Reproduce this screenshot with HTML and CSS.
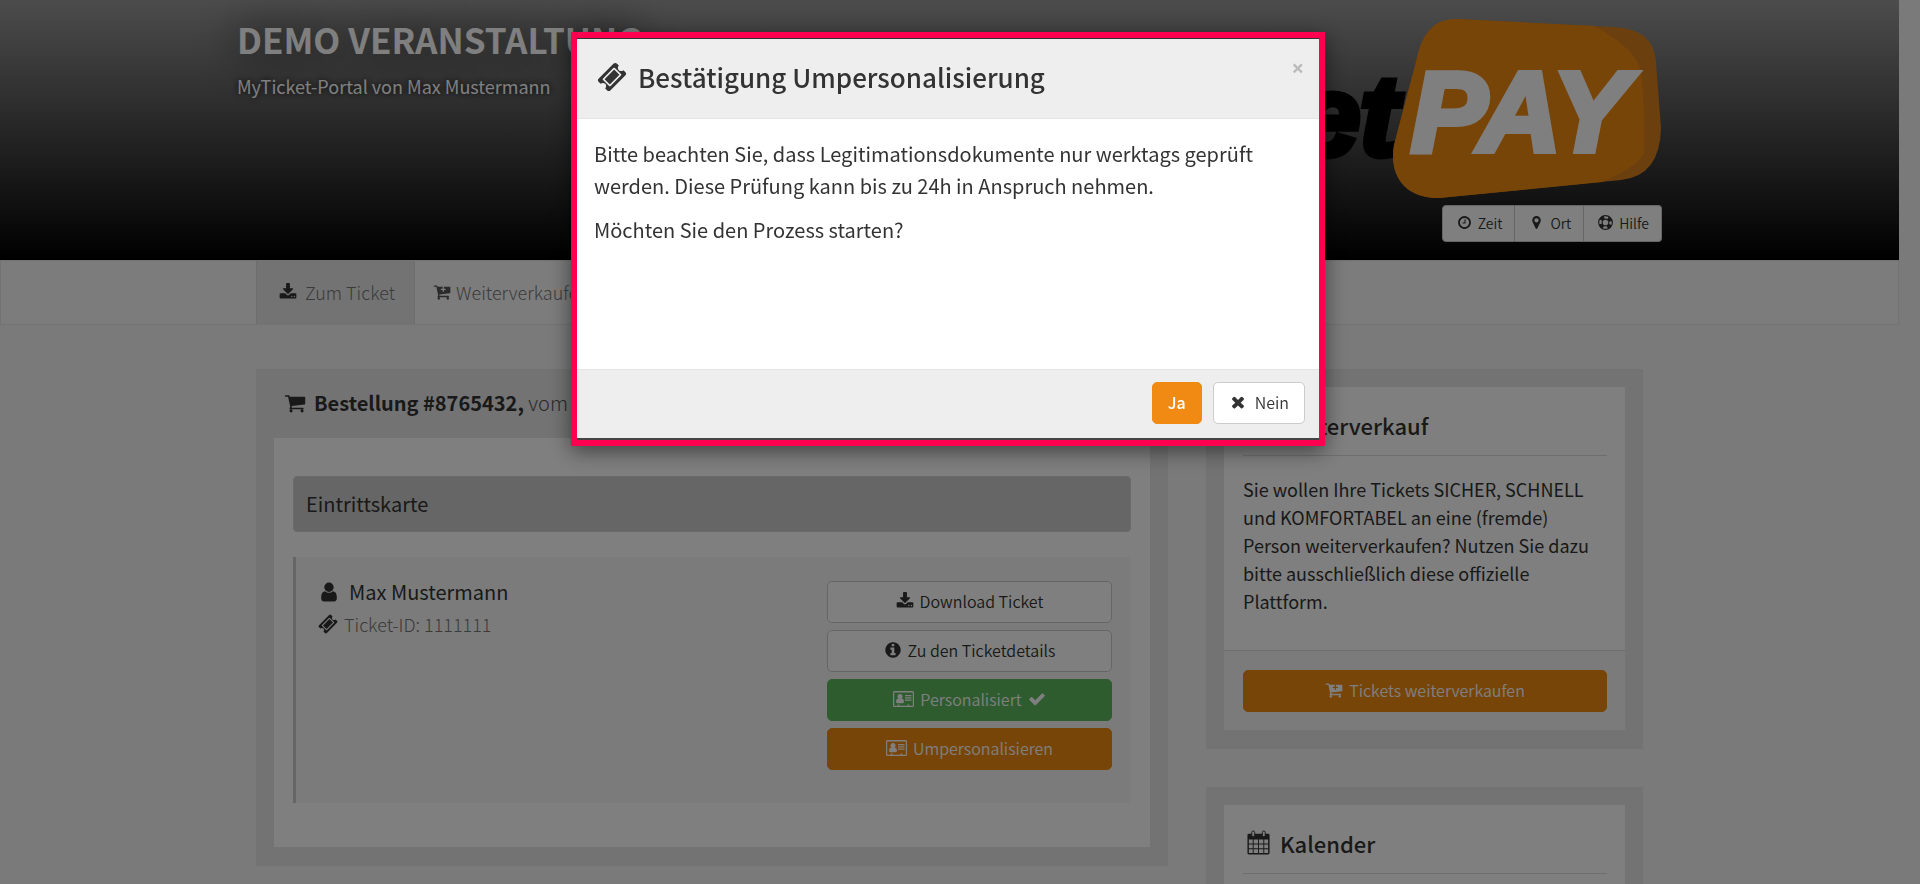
FILE: index.html
```html
<!DOCTYPE html>
<html lang="de">
<head>
  <meta charset="utf-8">
  <meta name="viewport" content="width=device-width, initial-scale=1">
  <title>MyTicket-Portal</title>
  <link rel="stylesheet" href="styles.css">
</head>
<body>

  <!-- Icons -->
  <svg class="sprite" aria-hidden="true">
    <symbol id="i-ticket" viewBox="0 0 1792 1792"><path d="M1024 452l316 316-572 572-316-316zm-211 979l618-618q19-19 19-45t-19-45l-362-362q-18-18-45-18t-45 18l-618 618q-19 19-19 45t19 45l362 362q18 18 45 18t45-18zm889-637l-907 908q-37 37-90.5 37t-90.5-37l-126-126q56-56 56-136t-56-136-136-56-136 56l-125-126q-37-37-37-90.5t37-90.5l907-906q37-37 90.5-37t90.5 37l125 125q-56 56-56 136t56 136 136 56 136-56l126 125q37 37 37 90.5t-37 90.5z"/></symbol>
    <symbol id="i-cart" viewBox="0 0 1792 1792"><path d="M704 1536q0 52-38 90t-90 38-90-38-38-90 38-90 90-38 90 38 38 90zm896 0q0 52-38 90t-90 38-90-38-38-90 38-90 90-38 90 38 38 90zm128-1088v512q0 24-16.5 42.5t-40.5 21.5l-1044 122q13 60 13 70 0 16-24 64h920q26 0 45 19t19 45-19 45-45 19h-1024q-26 0-45-19t-19-45q0-11 8-31.5t16-36 21.5-40 15.5-29.5l-177-823h-204q-26 0-45-19t-19-45 19-45 45-19h256q16 0 28.5 6.5t19.5 15.5 13 24.5 8 26 5.5 29.5 4.5 26h1201q26 0 45 19t19 45z"/></symbol>
    <symbol id="i-cart-plus" viewBox="0 0 1792 1792"><path d="M1280 640q0-26-19-45t-45-19h-128v-128q0-26-19-45t-45-19-45 19-19 45v128h-128q-26 0-45 19t-19 45 19 45 45 19h128v128q0 26 19 45t45 19 45-19 19-45v-128h128q26 0 45-19t19-45zM704 1536q0 52-38 90t-90 38-90-38-38-90 38-90 90-38 90 38 38 90zm896 0q0 52-38 90t-90 38-90-38-38-90 38-90 90-38 90 38 38 90zm128-1088v512q0 24-16.5 42.5t-40.5 21.5l-1044 122q13 60 13 70 0 16-24 64h920q26 0 45 19t19 45-19 45-45 19h-1024q-26 0-45-19t-19-45q0-11 8-31.5t16-36 21.5-40 15.5-29.5l-177-823h-204q-26 0-45-19t-19-45 19-45 45-19h256q16 0 28.5 6.5t19.5 15.5 13 24.5 8 26 5.5 29.5 4.5 26h1201q26 0 45 19t19 45z"/></symbol>
    <symbol id="i-download" viewBox="0 0 1792 1792"><path d="M1344 1344q0-26-19-45t-45-19-45 19-19 45 19 45 45 19 45-19 19-45zm256 0q0-26-19-45t-45-19-45 19-19 45 19 45 45 19 45-19 19-45zm128-224v320q0 40-28 68t-68 28h-1472q-40 0-68-28t-28-68v-320q0-40 28-68t68-28h465l135 136q58 56 136 56t136-56l136-136h464q40 0 68 28t28 68zm-325-569q17 41-14 70l-448 448q-18 19-45 19t-45-19l-448-448q-31-29-14-70 17-39 59-39h256v-448q0-26 19-45t45-19h256q26 0 45 19t19 45v448h256q42 0 59 39z"/></symbol>
    <symbol id="i-user" viewBox="0 0 1792 1792"><path d="M1536 1399q0 109-62.500 187t-150.500 78h-854q-88 0-150.500-78t-62.500-187q0-85 8.500-160.500t31.500-152 58.500-131 94-89 134.500-34.500q131 128 313 128t313-128q76 0 134.500 34.500t94 89 58.500 131 31.500 152 8.500 160.500zm-256-887q0 159-112.500 271.500t-271.500 112.500-271.500-112.500-112.500-271.500 112.500-271.500 271.500-112.500 271.500 112.500 112.500 271.500z"/></symbol>
    <symbol id="i-info" viewBox="0 0 1792 1792"><path d="M1152 1376v-160q0-14-9-23t-23-9h-96v-512q0-14-9-23t-23-9h-320q-14 0-23 9t-9 23v160q0 14 9 23t23 9h96v320h-96q-14 0-23 9t-9 23v160q0 14 9 23t23 9h448q14 0 23-9t9-23zm-128-896v-160q0-14-9-23t-23-9h-192q-14 0-23 9t-9 23v160q0 14 9 23t23 9h192q14 0 23-9t9-23zm640 416q0 209-103 385.500t-279.500 279.500-385.500 103-385.500-103-279.500-279.500-103-385.500 103-385.500 279.500-279.500 385.500-103 385.500 103 279.500 279.500 103 385.500z"/></symbol>
    <symbol id="i-check" viewBox="0 0 1792 1792"><path d="M1671 566q0 40-28 68l-724 724-136 136q-28 28-68 28t-68-28l-136-136-362-362q-28-28-28-68t28-68l136-136q28-28 68-28t68 28l294 295 656-657q28-28 68-28t68 28l136 136q28 28 28 68z"/></symbol>
    <symbol id="i-times" viewBox="0 0 1792 1792"><path d="M1490 1322q0 40-28 68l-136 136q-28 28-68 28t-68-28l-294-294-294 294q-28 28-68 28t-68-28l-136-136q-28-28-28-68t28-68l294-294-294-294q-28-28-28-68t28-68l136-136q28-28 68-28t68 28l294 294 294-294q28-28 68-28t68 28l136 136q28 28 28 68t-28 68l-294 294 294 294q28 28 28 68z"/></symbol>
    <symbol id="i-clock" viewBox="0 0 1792 1792"><path d="M1024 544v448q0 14-9 23t-23 9h-320q-14 0-23-9t-9-23v-64q0-14 9-23t23-9h224v-352q0-14 9-23t23-9h64q14 0 23 9t9 23zm416 352q0-148-73-273t-198-198-273-73-273 73-198 198-73 273 73 273 198 198 273 73 273-73 198-198 73-273zm224 0q0 209-103 385.500t-279.500 279.500-385.500 103-385.500-103-279.500-279.500-103-385.500 103-385.500 279.500-279.500 385.500-103 385.500 103 279.500 279.500 103 385.500z"/></symbol>
    <symbol id="i-marker" viewBox="0 0 1792 1792"><path d="M1152 640q0-106-75-181t-181-75-181 75-75 181 75 181 181 75 181-75 75-181zm256 0q0 109-33 179l-364 774q-16 33-47.500 52t-67.500 19-67.500-19-46.500-52l-365-774q-33-70-33-179 0-212 150-362t362-150 362 150 150 362z"/></symbol>
    <symbol id="i-ring" viewBox="0 0 16 16">
      <circle cx="8" cy="8" r="7.300" fill="none" stroke="currentColor" stroke-width="1.200"/>
      <circle cx="8" cy="8" r="3.600" fill="none" stroke="currentColor" stroke-width="1.200"/>
      <circle cx="8" cy="8" r="5.500" fill="none" stroke="currentColor" stroke-width="4" stroke-dasharray="4.320 4.320" stroke-dashoffset="-2.160"/>
    </symbol>
    <symbol id="i-card" viewBox="0 0 21 16">
      <path fill-rule="evenodd" d="M1.500 0h18A1.500 1.500 0 0 1 21 1.500v13a1.500 1.500 0 0 1-1.500 1.500h-18A1.500 1.500 0 0 1 0 14.500v-13A1.500 1.500 0 0 1 1.500 0zM1.200 1.500v13.200h3.600v-1.200h1.600v1.200h8.200v-1.200h1.600v1.200h3.600V1.500z"/>
      <circle cx="7" cy="5.400" r="2.500"/>
      <path d="M5 7.500h4q2 .600 2 3.300 0 1.400-1.300 1.400H4.300Q3 12.200 3 10.800 3 8.100 5 7.500zM12 4h6.500v1.200H12zM12 6.300h6.500v1.200H12zM12 8.600h6.500v1.200H12z"/>
    </symbol>
    <symbol id="i-calendar" viewBox="0 0 24 26">
      <path fill-rule="evenodd" d="M2 4h20a1.500 1.500 0 0 1 1.500 1.500v18.500a1.500 1.500 0 0 1-1.500 1.500H2a1.500 1.500 0 0 1-1.500-1.500V5.500A1.500 1.500 0 0 1 2 4zM2 10v4h4v-4zm5 0v4h4.500v-4zm5.500 0v4H17v-4zM18 10v4h4v-4zM2 15v4h4v-4zm5 0v4h4.500v-4zm5.500 0v4H17v-4zm5.500 0v4h4v-4zM2 20v4h4v-4zm5 0v4h4.500v-4zm5.500 0v4H17v-4zm5.500 0v4h4v-4z"/>
      <rect class="cal-ring" x="5" y="1" width="3" height="6" rx="1.500"/>
      <rect class="cal-ring" x="16" y="1" width="3" height="6" rx="1.500"/>
    </symbol>
  </svg>

  <header class="site-header">
    <div class="header-inner">
      <div class="header-text">
        <h1>DEMO VERANSTALTUNG</h1>
        <p>MyTicket-Portal von Max Mustermann</p>
      </div>
      <div class="header-side">
        <svg class="logo" viewBox="0 0 401 182" role="img" aria-label="ticketPAY">
          <text class="logo-ticket" x="137" y="137" text-anchor="end">et</text>
          <path class="logo-shade" d="M196 1L353 9Q393 11 395 44L400 110Q399 158 360 162L178 180C143 180 128 157 133 127L155 44Q163 0 196 1z"/>
          <path class="logo-badge" d="M196 1L333 8Q375 30 380 54Q384 90 383 135Q378 148 341 164L178 180C143 180 128 157 133 127L155 44Q163 0 196 1z"/>
          <text class="logo-pay" x="150" y="133">PAY</text>
        </svg>
        <div class="btn-group">
          <button type="button"><svg class="icon"><use href="#i-clock"/></svg>Zeit</button>
          <button type="button"><svg class="icon"><use href="#i-marker"/></svg>Ort</button>
          <button type="button"><svg class="icon"><use href="#i-ring"/></svg>Hilfe</button>
        </div>
      </div>
    </div>
  </header>

  <nav class="navbar">
    <div class="container nav-list">
      <a class="nav-link active" href="#ticket"><svg class="icon"><use href="#i-download"/></svg>Zum Ticket</a>
      <a class="nav-link" href="#resale"><svg class="icon"><use href="#i-cart-plus"/></svg>Weiterverkaufen</a>
    </div>
  </nav>

  <main class="container columns">
    <section class="panel" id="ticket">
      <h2 class="panel-title"><svg class="icon"><use href="#i-cart"/></svg><span><b>Bestellung #8765432,</b> vom</span></h2>
      <div class="panel-box order">
        <h3 class="category">Eintrittskarte</h3>
        <div class="ticket">
          <div class="ticket-info">
            <p class="ticket-name"><svg class="icon"><use href="#i-user"/></svg>Max Mustermann</p>
            <p class="ticket-id"><svg class="icon"><use href="#i-ticket"/></svg>Ticket-ID: 1111111</p>
          </div>
          <div class="ticket-actions">
            <button type="button" class="btn"><svg class="icon"><use href="#i-download"/></svg>Download Ticket</button>
            <button type="button" class="btn"><svg class="icon"><use href="#i-info"/></svg>Zu den Ticketdetails</button>
            <button type="button" class="btn btn-success"><svg class="icon card"><use href="#i-card"/></svg>Personalisiert<svg class="icon"><use href="#i-check"/></svg></button>
            <button type="button" class="btn btn-primary"><svg class="icon card"><use href="#i-card"/></svg>Umpersonalisieren</button>
          </div>
        </div>
      </div>
    </section>

    <aside class="sidebar">
      <section class="panel" id="resale">
        <div class="panel-box">
          <div class="widget">
            <h3><svg class="icon"><use href="#i-cart-plus"/></svg>Weiterverkauf</h3>
            <p>Sie wollen Ihre Tickets SICHER, SCHNELL und KOMFORTABEL an eine (fremde) Person weiterverkaufen? Nutzen Sie dazu bitte ausschließlich diese offizielle Plattform.</p>
          </div>
          <div class="widget-footer">
            <button type="button" class="btn btn-primary"><svg class="icon"><use href="#i-cart-plus"/></svg>Tickets weiterverkaufen</button>
          </div>
        </div>
      </section>
      <section class="panel">
        <div class="panel-box">
          <div class="widget">
            <h3><svg class="icon"><use href="#i-calendar"/></svg>Kalender</h3>
            <div class="calendar"></div>
          </div>
        </div>
      </section>
    </aside>
  </main>

  <div class="backdrop">
    <div class="modal" role="dialog" aria-modal="true" aria-labelledby="modal-title">
      <div class="modal-header">
        <h2 id="modal-title"><svg class="icon"><use href="#i-ticket"/></svg>Bestätigung Umpersonalisierung</h2>
        <button type="button" class="close" aria-label="Schließen">×</button>
      </div>
      <div class="modal-body">
        <p>Bitte beachten Sie, dass Legitimationsdokumente nur werktags geprüft werden. Diese Prüfung kann bis zu 24h in Anspruch nehmen.</p>
        <p>Möchten Sie den Prozess starten?</p>
      </div>
      <div class="modal-footer">
        <button type="button" class="btn btn-primary btn-yes">Ja</button>
        <button type="button" class="btn btn-no"><svg class="icon"><use href="#i-times"/></svg>Nein</button>
      </div>
    </div>
  </div>

</body>
</html>
```
FILE: styles.css
```css
* {
  box-sizing: border-box;
}

body {
  margin: 0;
  padding-right: 21px;
  height: 100vh;
  overflow: hidden;
  background-color: #f5f5f5;
  color: #333;
  font-family: "Noto Sans CJK SC", "Noto Sans", sans-serif;
  font-size: 18px;
  line-height: 28px;
}

h1, h2, h3, p {
  margin: 0;
}

button {
  font-family: inherit;
  font-weight: 350;
  cursor: pointer;
}

.sprite {
  display: none;
}

.icon {
  width: 18px;
  height: 18px;
  flex: none;
  fill: currentColor;
}

.container {
  max-width: 1387px;
  margin: 0 auto;
}

/* Header */
.site-header {
  height: 260px;
  background: linear-gradient(#999, #000);
}

.header-inner {
  max-width: 1425px;
  margin: 0 auto;
  display: flex;
  justify-content: space-between;
}

.header-text {
  padding-top: 20px;
  color: white;
}

.header-text h1 {
  font-size: 35px;
  line-height: 38px;
  font-weight: bold;
  text-shadow: 0 0 40px black;
}

.header-text p {
  margin-top: 14px;
  text-shadow: 0 0 6px black;
}

.header-side {
  padding-top: 18px;
  display: flex;
  flex-direction: column;
  align-items: flex-end;
}

.logo {
  width: 401px;
  height: 182px;
  overflow: visible;
}

.logo text {
  font-family: "Liberation Sans", sans-serif;
  font-weight: bold;
  font-style: italic;
}

.logo-ticket {
  font-size: 114px;
  stroke: black;
  stroke-width: 7px;
}

.logo-pay {
  font-size: 114px;
  fill: white;
  stroke: white;
  stroke-width: 6px;
}

.logo-badge {
  fill: #f08a12;
}

.logo-shade {
  fill: #d87e1f;
}

.btn-group {
  margin-top: 5px;
  display: flex;
}

.btn-group button {
  display: flex;
  align-items: center;
  gap: 6px;
  height: 37px;
  padding: 0 12px 2px 14px;
  border: 1px solid #ccc;
  border-left-width: 0;
  background-color: white;
  color: #333;
  font-size: 14px;
}

.btn-group button:first-child {
  border-left-width: 1px;
  border-radius: 4px 0 0 4px;
}

.btn-group button:last-child {
  border-radius: 0 4px 4px 0;
}

.btn-group .icon {
  width: 15px;
  height: 15px;
}

/* Navigation */
.navbar {
  border: 1px solid #e7e7e7;
  background-color: #f9f9f9;
}

.nav-list {
  display: flex;
}

.nav-link {
  display: flex;
  align-items: center;
  gap: 5px;
  height: 63px;
  padding: 0 18px 2px;
  color: #777;
  font-weight: 300;
  text-decoration: none;
}

.nav-link.active {
  gap: 8px;
  padding: 0 19px 2px 22px;
  border: 1px solid #ddd;
  border-width: 0 1px;
  background-color: #e7e7e7;
}

.nav-link .icon {
  color: #555;
}

.nav-link.active .icon {
  color: #333;
}

/* Content */
.columns {
  margin-top: 44px;
  display: grid;
  grid-template-columns: 912fr 437fr;
  gap: 38px;
  align-items: start;
}

.sidebar {
  display: grid;
  gap: 38px;
}

.panel {
  padding: 18px 18px 19px;
  background-color: #e6e6e6;
}

.panel-title {
  display: flex;
  align-items: center;
  gap: 8px;
  height: 51px;
  padding: 0 0 19px 10px;
  font-size: 20px;
  font-weight: 300;
  color: #555;
}

.panel-title b {
  font-weight: 700;
}

.panel-title b,
.panel-title .icon {
  color: #333;
}

.panel-title .icon {
  width: 22px;
  height: 22px;
}

.panel-box {
  background-color: white;
}

.order {
  padding: 38px 19px 44px;
}

.category {
  height: 56px;
  padding: 0 12px;
  border: 1px solid #d5d5d5;
  border-radius: 4px;
  background-color: #ccc;
  font-size: 20px;
  line-height: 54px;
  font-weight: normal;
}

.ticket {
  display: flex;
  justify-content: space-between;
  margin-top: 25px;
  height: 246px;
  padding: 24px 19px 0 22px;
  border-left: 3px solid #ccc;
  background-color: #f7f7f7;
}

.ticket-info p {
  display: flex;
  align-items: center;
}

.ticket-name {
  height: 22px;
  gap: 9px;
  font-size: 20px;
}

.ticket-name .icon {
  width: 22px;
  height: 22px;
}

.ticket-id {
  height: 42px;
  gap: 6px;
  color: #777;
  font-weight: 300;
}

.ticket-id .icon {
  width: 20px;
  height: 20px;
  color: #333;
}

.ticket-actions {
  width: 285px;
  display: flex;
  flex-direction: column;
  gap: 7px;
}

.btn {
  display: flex;
  align-items: center;
  justify-content: center;
  gap: 6px;
  height: 42px;
  padding: 0 15px 2px;
  border: 1px solid #ccc;
  border-radius: 5px;
  background-color: white;
  color: #333;
  font-size: 16px;
}

.btn-success {
  border-color: #5cb85c;
  background-color: #5cb85c;
  color: white;
}

.btn-primary {
  border-color: #f08a12;
  background-color: #f08a12;
  color: white;
}

.icon.card {
  width: 21px;
  height: 16px;
}

/* Sidebar boxes */
.widget {
  padding: 19px 18px 35px 19px;
}

.widget h3 {
  display: flex;
  align-items: center;
  gap: 9px;
  height: 50px;
  padding: 0 0 12px 3px;
  border-bottom: 1px solid #ddd;
  font-size: 22px;
  font-weight: 500;
}

.widget h3 .icon {
  width: 25px;
  height: 25px;
}

.widget p {
  margin-top: 19px;
  padding-right: 12px;
}

.calendar {
  height: 280px;
}

.cal-ring {
  fill: white;
  stroke: currentColor;
  stroke-width: 1px;
}

.widget-footer {
  padding: 19px 18px 18px 19px;
  border-top: 1px solid #ddd;
  background-color: #f7f7f7;
}

.widget-footer .btn {
  width: 100%;
}

/* Modal */
.backdrop {
  position: fixed;
  inset: 0;
  padding: 32px 24px 0 0;
  background-color: rgba(0, 0, 0, 0.5);
}

.modal {
  max-width: 754px;
  margin: 0 auto;
  border: 6px solid #ff0050;
  background-color: white;
  box-shadow: 0 5px 20px rgba(0, 0, 0, 0.5);
}

.modal-header {
  display: flex;
  justify-content: space-between;
  height: 81px;
  padding: 0 15px 0 20px;
  border-top: 1px solid #333;
  border-bottom: 1px solid #e5e5e5;
  background-color: #eee;
}

.modal-header h2 {
  display: flex;
  align-items: center;
  gap: 11px;
  padding-bottom: 3px;
  font-size: 26px;
  font-weight: 500;
}

.modal-header .icon {
  width: 30px;
  height: 30px;
}

.close {
  align-self: flex-start;
  margin-top: 17px;
  padding: 0;
  border: 0;
  background: none;
  color: #bbb;
  font-family: "Open Sans", sans-serif;
  font-size: 22px;
  font-weight: bold;
  line-height: 22px;
}

.modal-body {
  height: 250px;
  padding: 19px 17px;
  font-size: 20px;
  line-height: 32px;
}

.modal-body p + p {
  margin-top: 12px;
}

.modal-footer {
  display: flex;
  justify-content: flex-end;
  gap: 11px;
  height: 71px;
  padding: 12px 14px;
  border-top: 1px solid #e5e5e5;
  border-bottom: 2px solid #444;
  background-color: #eee;
}

.btn-yes {
  font-weight: 500;
}

.btn-no {
  gap: 8px;
}
```
